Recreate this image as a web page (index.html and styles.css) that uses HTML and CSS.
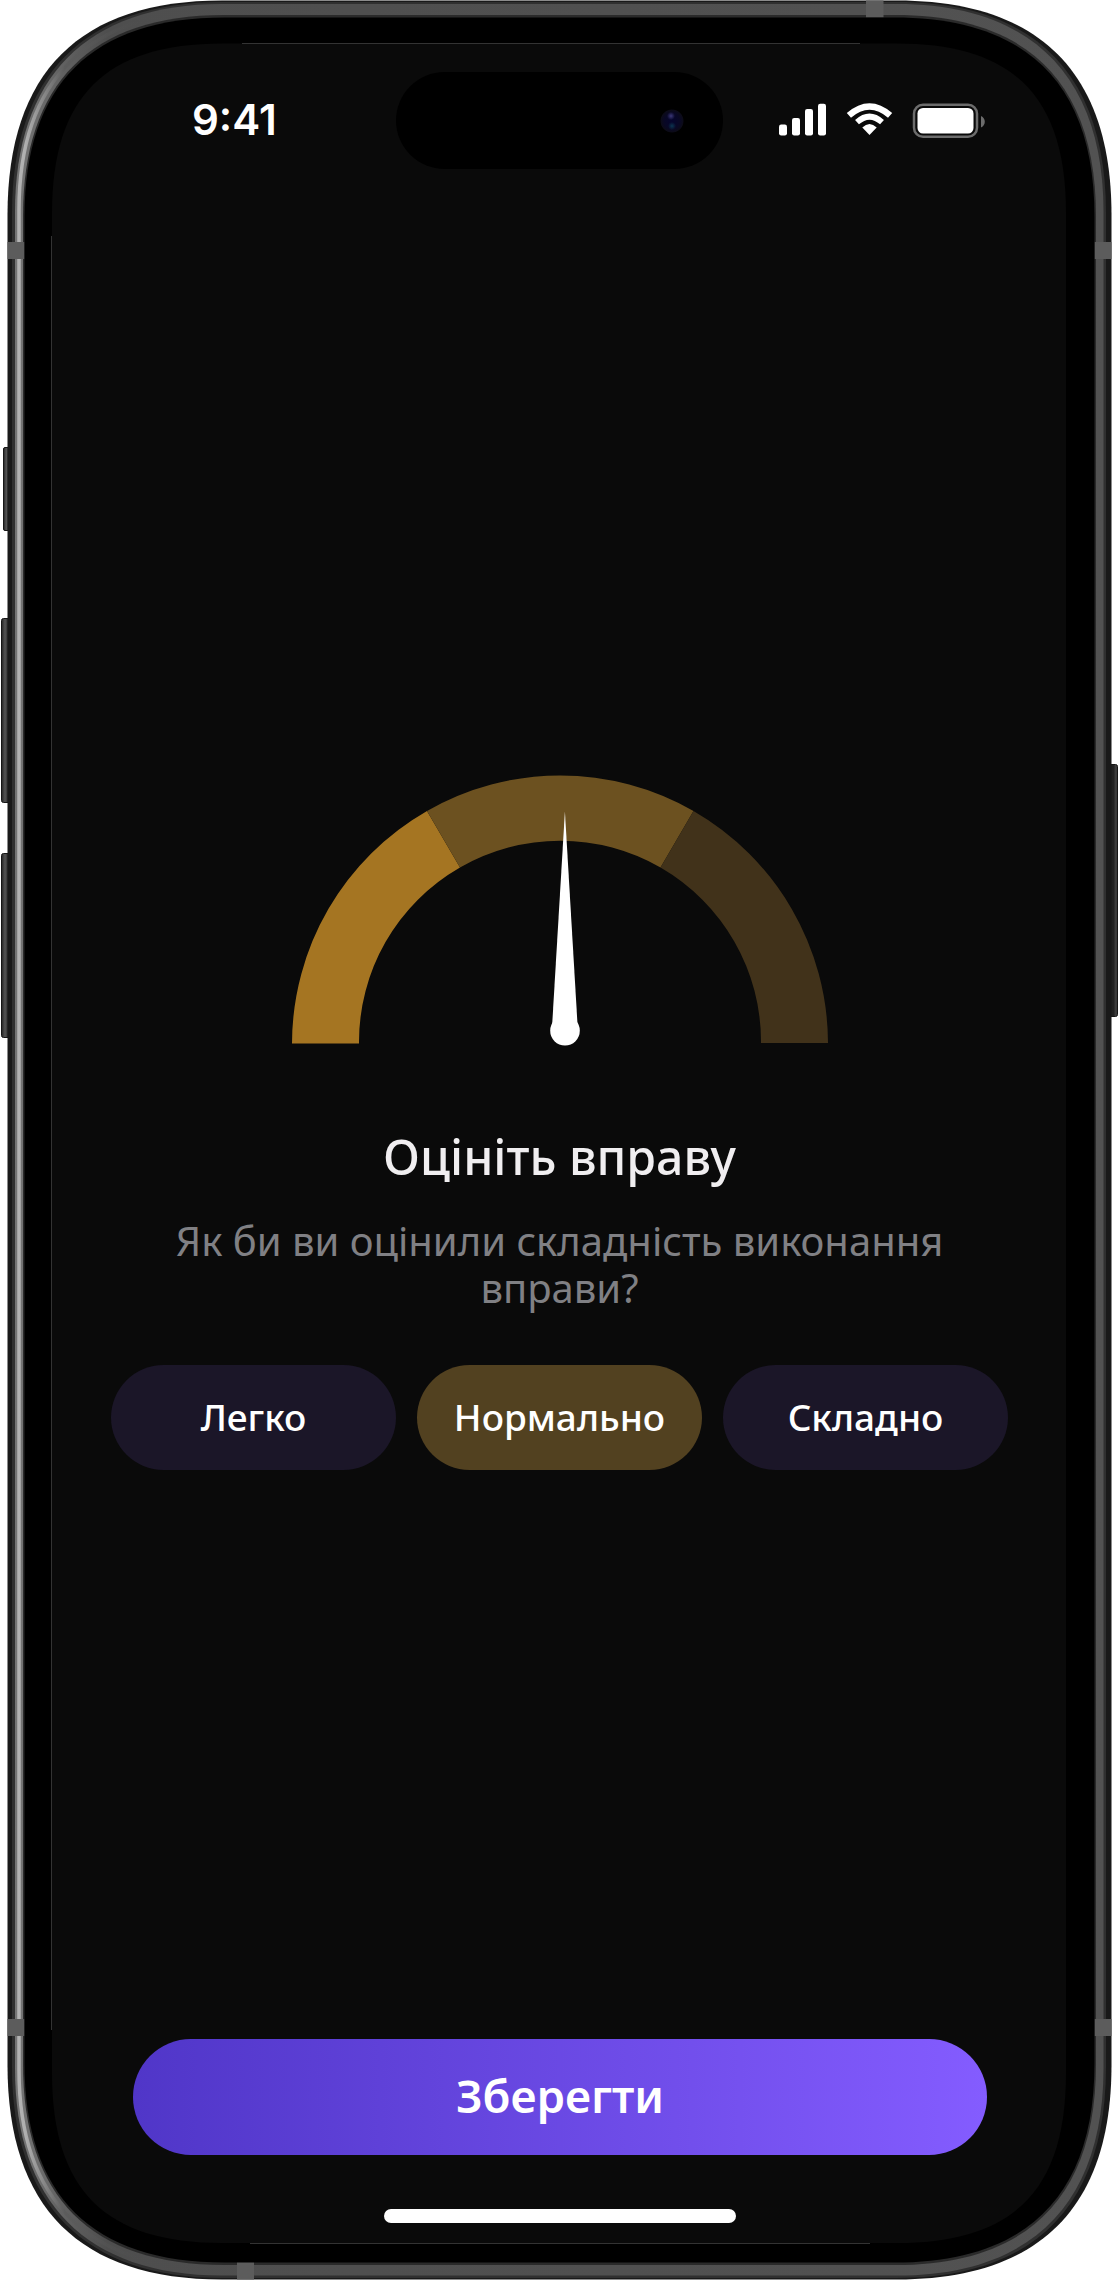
FILE: index.html
```html
<!DOCTYPE html>
<html lang="uk">
<head>
<meta charset="utf-8">
<title>Оцініть вправу</title>
<link rel="stylesheet" href="styles.css">
</head>
<body>
<div class="phone">
  <svg class="frame" viewBox="0 0 1119 2280" aria-hidden="true">
    <defs>
      <linearGradient id="metal" gradientUnits="userSpaceOnUse" x1="8" y1="0" x2="1111" y2="0">
        <stop offset="0" stop-color="#777"/><stop offset=".02" stop-color="#707070"/><stop offset=".09" stop-color="#4e4e4e"/><stop offset="1" stop-color="#525252"/>
      </linearGradient>
      <linearGradient id="shine" gradientUnits="userSpaceOnUse" x1="8" y1="0" x2="150" y2="0">
        <stop offset="0" stop-color="#b8b8b8"/><stop offset=".12" stop-color="#b0b0b0"/><stop offset=".4" stop-color="#5c5c5c"/><stop offset="1" stop-color="#4e4e4e" stop-opacity="0"/>
      </linearGradient>
      <linearGradient id="key" x1="0" x2="1" y1="0" y2="0">
        <stop offset="0" stop-color="#222"/><stop offset=".35" stop-color="#555"/><stop offset=".6" stop-color="#333"/><stop offset="1" stop-color="#222"/>
      </linearGradient>
      <linearGradient id="power" x1="0" x2="1" y1="0" y2="0">
        <stop offset="0" stop-color="#1c1c1c"/><stop offset=".6" stop-color="#222"/><stop offset=".85" stop-color="#444"/><stop offset="1" stop-color="#222"/>
      </linearGradient>
    </defs>
    <g fill="url(#key)" stroke="#161616">
      <rect x="3.500" y="447.500" width="8" height="83" rx="1.500"/>
      <rect x="1.500" y="618.500" width="10" height="184" rx="2"/>
      <rect x="1.500" y="853.500" width="10" height="184" rx="2"/>
      <rect x="1108" y="764.500" width="9.500" height="252" rx="2" fill="url(#power)"/>
    </g>
    <path fill="#191919" d="M7.500 215C7.500 72 80 .5 222 .5H897C1039 .5 1111.500 72 1111.500 215V2065C1111.500 2208 1039 2279.500 897 2279.500H222C80 2279.500 7.500 2208 7.500 2065Z"/>
    <path fill="#303030" d="M12 213C12 76 84 2 222 2H897C1036 2 1106 76 1106 213V2067C1106 2204 1036 2278 897 2278H222C84 2278 12 2204 12 2067Z"/>
    <path fill="url(#metal)" d="M15 212C15 78 86 4 222 4H897C1033 4 1103.500 78 1103.500 212V2068C1103.500 2202 1033 2275.500 897 2275.500H222C86 2275.500 15 2202 15 2068Z"/>
    <path fill="#2a2a2a" d="M23 216C23 83 91 15 224 15H895C1028 15 1096 83 1096 216V2064C1096 2197 1028 2265 895 2265H224C91 2265 23 2197 23 2064Z"/>
    <path fill="none" stroke="url(#shine)" stroke-width="3.500" d="M222 10.500C89 10.500 19 80 19 210V2070C19 2200 89 2269.500 222 2269.500"/>
    <path fill="#5c5c5c" d="M7.500 242h17v17h-17zM1094.500 242h17v17h-17zM7.500 2019h17v17h-17zM1094.500 2019h17v17h-17zM866 .5h17.500v17h-17.500zM237 2262h17v17.500h-17z"/>
    <path d="M24.500 217C24.500 84 92 17.500 225 17.500H894C1027 17.500 1094.500 84 1094.500 217V2063C1094.500 2196 1027 2262.500 894 2262.500H225C92 2262.500 24.500 2196 24.500 2063Z"/>
    <path fill="#0a0a0a" d="M52 213C52 97 105 43.500 222 43.500H897C1014 43.500 1066 97 1066 213V2073C1066 2190 1014 2243 897 2243H222C105 2243 52 2190 52 2073Z"/>
    <path fill="none" stroke="#333" d="M51.500 236V2030M242 43.500H860M250 2243.500H870"/>
  </svg>

  <main class="screen">
    <header class="status">
      <span class="time">9:41</span>
      <div class="island"><i class="lens"></i></div>
      <svg class="indicators" viewBox="0 0 210 40" aria-hidden="true">
        <g fill="#fff">
          <rect x="1" y="24.500" width="8" height="11" rx="2.200"/>
          <rect x="14" y="18" width="8" height="17.500" rx="2.200"/>
          <rect x="27" y="9" width="8" height="26.500" rx="2.200"/>
          <rect x="40" y="3.700" width="8" height="31.800" rx="2.200"/>
          <path d="M91.500 35L84.300 27.500Q91.500 20.500 98.700 27.500Z"/>
        </g>
        <g fill="none" stroke="#fff">
          <path stroke-width="6.400" d="M70.900 15.400Q91.500-2.400 112.100 15.400"/>
          <path stroke-width="5.800" d="M79 22.200Q91.500 11 104 22.200"/>
        </g>
        <rect x="136" y="4.800" width="63" height="32" rx="9" fill="none" stroke="#6c6c6c" stroke-width="2.500"/>
        <rect x="139.500" y="8" width="56" height="25.500" rx="5.500" fill="#fff"/>
        <path d="M203 16Q206.800 18 206.800 21.700T203 27.500Z" fill="#6c6c6c"/>
      </svg>
    </header>

    <section class="rating">
      <svg class="gauge" viewBox="0 0 536 270" aria-hidden="true">
        <path fill="#a57522" d="M0 268.500A268 268.500 0 0 1 135 36L168 92.500A201 201 0 0 0 67 268.500Z"/>
        <path fill="#6c5120" d="M135 36A268 268.500 0 0 1 401.500 36L368.500 92.500A201 201 0 0 0 168 92.500Z"/>
        <path fill="#41321a" d="M401.500 36A268 268.500 0 0 1 536 268H469A201 201 0 0 0 368.500 92.500Z"/>
        <path fill="#fff" d="M272.900 36.500L285.500 249H260.200Z"/>
        <circle cx="273" cy="255.800" r="14.800" fill="#fff"/>
      </svg>
      <h1 class="title">Оцініть вправу</h1>
      <p class="question">Як би ви оцінили складність виконання вправи?</p>
      <div class="options">
        <button class="option">Легко</button>
        <button class="option option-active">Нормально</button>
        <button class="option">Складно</button>
      </div>
    </section>

    <footer class="actions">
      <button class="save">Зберегти</button>
      <div class="home"></div>
    </footer>
  </main>
</div>
</body>
</html>
```
FILE: styles.css
```css
* { box-sizing: border-box; }
body { margin: 0; background: #fff; font-family: "Noto Sans", sans-serif; }
.phone { display: grid; width: 1119px; height: 2280px; overflow: hidden; }
.frame { grid-area: 1 / 1; width: 1119px; height: 2280px; display: block; }
.screen {
  grid-area: 1 / 1;
  z-index: 1;
  margin: 43px 53px 37px 52px;
  display: flex;
  flex-direction: column;
  color: #f0eef0;
}
.status { display: flex; align-items: center; height: 155px; padding-left: 140px; }
.time {
  width: 204px;
  padding-bottom: 2px;
  font: 600 42px/60px Inter, sans-serif;
  color: #fff;
}
.island {
  width: 327px;
  height: 97px;
  border-radius: 49px;
  background: #000;
  display: flex;
  align-items: center;
  justify-content: flex-end;
  padding-right: 39px;
}
.lens {
  width: 24px;
  height: 24px;
  border-radius: 50%;
  background:
    radial-gradient(circle at 11px 7px, #3c3878 0, transparent 4px),
    radial-gradient(circle at 12px 17px, #0b3550 0, transparent 4px),
    radial-gradient(circle, #05052e 0, #090824 8px, #0c0b18 11px, #000 12px);
}
.indicators { width: 210px; height: 40px; margin: 0 0 2px 55px; }
.rating { flex: 1; display: flex; flex-direction: column; align-items: center; padding: 577px 0 0 1px; }
.gauge { width: 536px; height: 270px; overflow: visible; }
.title { margin: 79px 0 0; font-weight: 500; font-size: 48.2px; line-height: 64px; }
.question {
  width: 800px;
  margin: 29px 0 0;
  font-size: 40px;
  line-height: 47px;
  text-align: center;
  color: #808084;
}
.options { display: flex; gap: 21px; margin-top: 54px; }
button { border: 0; padding: 0; font-family: inherit; color: #fff; }
.option {
  width: 285px;
  height: 105px;
  padding-bottom: 3px;
  border-radius: 53px;
  background: #1b1628;
  font-size: 37px;
  font-weight: 500;
}
.option-active { background: #524120; }
.actions { display: flex; flex-direction: column; align-items: center; padding-left: 2px; }
.save {
  width: 854px;
  height: 116px;
  padding-bottom: 5px;
  border-radius: 58px;
  background: linear-gradient(90deg, #5036c8, #845cff);
  font-size: 45.5px;
  font-weight: 600;
}
.home { width: 352px; height: 14px; margin: 54px 0 20px; border-radius: 7px; background: #fff; }
```
